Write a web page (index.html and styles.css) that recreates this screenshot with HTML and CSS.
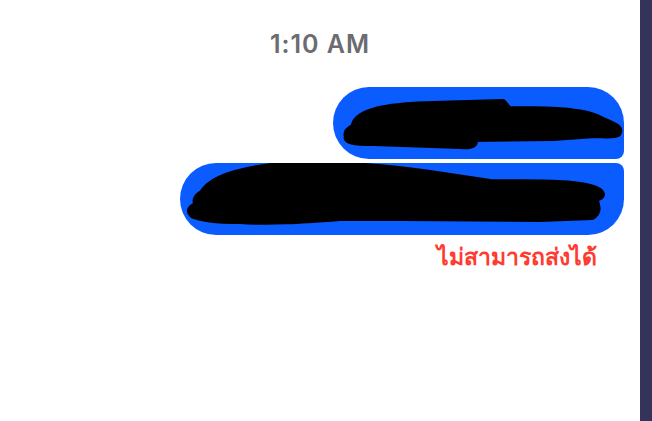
FILE: index.html
```html
<!DOCTYPE html>
<html lang="th">
<head>
  <meta charset="UTF-8" />
  <meta name="viewport" content="width=device-width, initial-scale=1.0" />
  <title>Messages</title>
  <link rel="stylesheet" href="styles.css">
</head>
<body>
  <div class="screen">
    <div class="chat">
      <div class="time">1:10 AM</div>

      <div class="thread">
        <div class="bubble first">
          <svg class="redact" width="291" height="72" viewBox="0 0 291 72">
            <path d="M22,35 C30,22 60,18 100,17 L170,15 L176,22 C210,22 250,22 268,32 C280,38 290,40 285,47 C280,50 270,48 262,48 L220,51 L140,52 C145,56 140,60 128,59 L40,56 C20,56 12,54 14,50 C12,45 16,42 20,40 Z" />
          </svg>
        </div>
        <div class="bubble last">
          <svg class="redact" width="444" height="72" viewBox="0 0 444 72">
            <path d="M22,30 C30,15 60,6 100,2 C150,-1 200,3 250,10 L310,19 C350,20 385,18 410,24 C425,28 425,34 415,36 C418,42 420,50 412,54 L360,56 L220,55 L160,55 C120,58 90,60 60,58 C40,58 20,56 12,52 C8,48 10,44 17,42 C14,38 16,33 22,30 Z" />
          </svg>
        </div>
        <div class="status">ไม่สามารถส่งได้</div>
      </div>
    </div>
    <div class="edge"></div>
  </div>
</body>
</html>
```

FILE: styles.css
```css
html, body {
  margin: 0;
  padding: 0;
  background: #fff;
}
.screen {
  display: flex;
  height: 421px;
}
.chat {
  flex: 1;
  display: flex;
  flex-direction: column;
}
.edge {
  width: 12px;
  background: #35335a;
}
.time {
  text-align: center;
  font-family: Inter, "Noto Sans", sans-serif;
  font-weight: 600;
  font-size: 25px;
  letter-spacing: 1px;
  color: #6b6b70;
  margin-top: 29px;
  line-height: 30px;
}
.thread {
  display: flex;
  flex-direction: column;
  align-items: flex-end;
  padding-right: 16px;
  margin-top: 28px;
  gap: 4px;
}
.bubble {
  background: #0b5cff;
  border-radius: 36px;
}
.bubble.first { border-bottom-right-radius: 8px; }
.bubble.last { border-top-right-radius: 8px; }
.redact {
  display: block;
}
.redact path {
  fill: #000;
  stroke: #000;
  stroke-width: 6;
  stroke-linejoin: round;
}
.status {
  font-family: "Noto Sans", sans-serif;
  font-weight: 700;
  font-size: 23px;
  color: #ff3b30;
  margin-right: 27px;
  line-height: 34px;
}
```
